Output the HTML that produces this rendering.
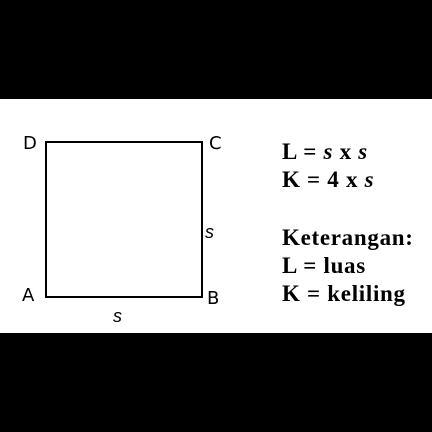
<!DOCTYPE html>
<html><head><style>
body{margin:0;width:432px;height:432px;background:#000;position:relative;overflow:hidden}
.w{position:absolute;left:0;top:99px;width:432px;height:234px;background:#fff}
.sq{position:absolute;left:45px;top:141px;width:154px;height:153px;border:2px solid #000}
.l{position:absolute;font-family:"DejaVu Sans","Liberation Sans",sans-serif;font-size:18px;line-height:18px;color:#000}
.i{font-style:italic;font-family:"Liberation Sans",sans-serif}
.t{position:absolute;left:282px;font-family:"Liberation Serif",serif;font-weight:bold;font-size:23px;letter-spacing:0.7px;line-height:23px;color:#000;white-space:nowrap}
</style></head><body>
<div class="w"></div>
<div class="sq"></div>
<div class="l" style="left:23px;top:135px">D</div>
<div class="l" style="left:209px;top:135px">C</div>
<div class="l" style="left:22px;top:287px">A</div>
<div class="l" style="left:207px;top:290px">B</div>
<div class="l i" style="left:205px;top:223px">s</div>
<div class="l i" style="left:113px;top:307px">s</div>
<div class="t" style="top:140px">L = <i>s</i> x <i>s</i></div>
<div class="t" style="top:168px">K = 4 x <i>s</i></div>
<div class="t" style="top:226px">Keterangan:</div>
<div class="t" style="top:254px">L = luas</div>
<div class="t" style="top:282px">K = keliling</div>
</body></html>
